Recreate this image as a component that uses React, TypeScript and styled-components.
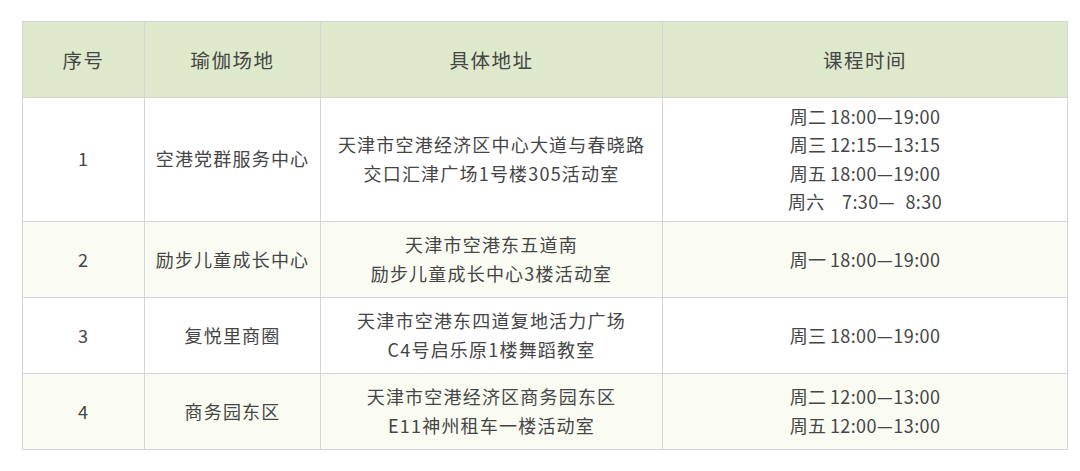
import styled, { createGlobalStyle } from "styled-components";

const GlobalStyle = createGlobalStyle`
  body {
    margin: 0;
    background: #ffffff;
    font-family: "Noto Sans CJK SC", "Noto Sans", sans-serif;
  }
`;

const Page = styled.div`
  padding: 21px 0 0 22px;
`;

const Table = styled.table`
  border-collapse: collapse;
  width: 1045px;
  table-layout: fixed;
  color: #454545;
  border: 1px solid #d3d5d9;
`;

const Col = styled.col<{ $w: number }>`
  width: ${(p) => p.$w}px;
`;

const HeadRow = styled.tr`
  height: 76px;
  background: #dee9cc;
`;

const HeadCell = styled.th`
  font-weight: 400;
  font-size: 19.5px;
  letter-spacing: 1.5px;
  text-align: center;
  vertical-align: middle;
  border: 1px solid #d3d5d9;
  padding: 0 8px;
`;

// 짝수 행은 연한 배경
const Row = styled.tr<{ $striped?: boolean }>`
  height: 76px;
  background: ${(p) => (p.$striped ? "#fafcf4" : "#ffffff")};
`;

const Cell = styled.td`
  font-size: 18px;
  letter-spacing: 1.2px;
  line-height: 28.3px;
  text-align: center;
  vertical-align: middle;
  border: 1px solid #d3d5d9;
  padding: 4px 8px 6px;
  white-space: pre-line;
`;

const Times = styled.div`
  white-space: pre;
  letter-spacing: 0.4px;
  word-spacing: -1px;
`;

interface Venue {
  no: string;
  name: string;
  address: string[];
  times: string[];
}

const venues: Venue[] = [
  {
    no: "1",
    name: "空港党群服务中心",
    address: ["天津市空港经济区中心大道与春晓路", "交口汇津广场1号楼305活动室"],
    times: ["周二 18:00—19:00", "周三 12:15—13:15", "周五 18:00—19:00", "周六 \u2007 7:30—\u20078:30"],
  },
  {
    no: "2",
    name: "励步儿童成长中心",
    address: ["天津市空港东五道南", "励步儿童成长中心3楼活动室"],
    times: ["周一 18:00—19:00"],
  },
  {
    no: "3",
    name: "复悦里商圈",
    address: ["天津市空港东四道复地活力广场", "C4号启乐原1楼舞蹈教室"],
    times: ["周三 18:00—19:00"],
  },
  {
    no: "4",
    name: "商务园东区",
    address: ["天津市空港经济区商务园东区", "E11神州租车一楼活动室"],
    times: ["周二 12:00—13:00", "周五 12:00—13:00"],
  },
];

export default () => {
  return (
    <Page>
      <GlobalStyle />
      <Table>
        <colgroup>
          <Col $w={122} />
          <Col $w={176} />
          <Col $w={342} />
          <Col $w={405} />
        </colgroup>
        <thead>
          <HeadRow>
            <HeadCell>序号</HeadCell>
            <HeadCell>瑜伽场地</HeadCell>
            <HeadCell>具体地址</HeadCell>
            <HeadCell>课程时间</HeadCell>
          </HeadRow>
        </thead>
        <tbody>
          {venues.map((v, i) => (
            <Row key={v.no} $striped={i % 2 === 1}>
              <Cell>{v.no}</Cell>
              <Cell>{v.name}</Cell>
              <Cell>{v.address.join("\n")}</Cell>
              <Cell>
                <Times>{v.times.join("\n")}</Times>
              </Cell>
            </Row>
          ))}
        </tbody>
      </Table>
    </Page>
  );
};
